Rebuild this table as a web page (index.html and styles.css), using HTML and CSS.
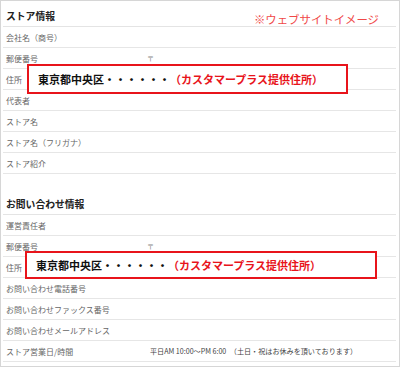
FILE: index.html
```html
<!DOCTYPE html>
<html lang="ja">

<head>
  <meta charset="UTF-8" />
  <meta name="viewport" content="width=device-width, initial-scale=1.0" />
  <title>ストア情報</title>
  <link rel="stylesheet" href="styles.css">
</head>

<body>
  <div class="sheet">
    <!-- Caption over the top right corner -->
    <p class="note">※ウェブサイトイメージ</p>

    <section class="group">
      <h2 class="group-title">ストア情報</h2>
      <div class="row"><span class="label">会社名（商号）</span><span class="value"></span></div>
      <div class="row"><span class="label">郵便番号</span><span class="value postal">〒</span></div>
      <div class="row">
        <span class="label">住所</span><span class="value"></span>
        <div class="callout callout-store">
          <span class="addr">東京都中央区・・・・・・</span><span class="addr-note">（カスタマープラス提供住所）</span>
        </div>
      </div>
      <div class="row"><span class="label">代表者</span><span class="value"></span></div>
      <div class="row"><span class="label">ストア名</span><span class="value"></span></div>
      <div class="row"><span class="label">ストア名（フリガナ）</span><span class="value"></span></div>
      <div class="row"><span class="label">ストア紹介</span><span class="value"></span></div>
    </section>

    <section class="group group-contact">
      <h2 class="group-title">お問い合わせ情報</h2>
      <div class="row"><span class="label">運営責任者</span><span class="value"></span></div>
      <div class="row"><span class="label">郵便番号</span><span class="value postal">〒</span></div>
      <div class="row">
        <span class="label">住所</span><span class="value"></span>
        <div class="callout callout-contact">
          <span class="addr">東京都中央区・・・・・・</span><span class="addr-note">（カスタマープラス提供住所）</span>
        </div>
      </div>
      <div class="row"><span class="label">お問い合わせ電話番号</span><span class="value"></span></div>
      <div class="row"><span class="label">お問い合わせファックス番号</span><span class="value"></span></div>
      <div class="row"><span class="label">お問い合わせメールアドレス</span><span class="value"></span></div>
      <div class="row"><span class="label">ストア営業日/時間</span><span class="value hours">平日AM 10:00～PM 6:00　（土日・祝はお休みを頂いております）</span></div>
    </section>
  </div>
</body>

</html>
```

FILE: styles.css
```css
* {
  box-sizing: border-box;
}

body {
  margin: 0;
  background: #fff;
  font-family: "Noto Sans CJK JP", "Noto Sans", sans-serif;
}

/* Outer frame of the form */
.sheet {
  position: relative;
  width: 400px;
  height: 367px;
  border: 1px solid #d6d6d6;
  padding: 0 3px 4px 2px;
  overflow: hidden;
}

.note {
  position: absolute;
  top: 12px;
  right: 17px;
  margin: 0;
  padding: 0 3px;
  background: #fff;
  font-size: 11.4px;
  line-height: 13px;
  color: #f04848;
}

.group-contact {
  margin-top: 15px;
}

.group-title {
  display: flex;
  align-items: center;
  height: 26px;
  margin: 0;
  padding: 5px 0 0 3px;
  border-bottom: 1px solid #e4e4e4;
  font-size: 9.8px;
  font-weight: bold;
  color: #222;
}

/* One line of the form: label column + value column */
.row {
  position: relative;
  display: grid;
  grid-template-columns: 144px 1fr;
  align-items: center;
  height: 21px;
  padding-left: 3px;
  border-bottom: 1px solid #e6e6e6;
  font-size: 8px;
  color: #666;
}

.value {
  color: #555;
}

.postal {
  font-size: 7px;
  color: #888;
  margin-left: -3px;
}

.hours {
  font-size: 7.1px;
  color: #444;
  white-space: nowrap;
}

/* Highlighted address box laid over the address row */
.callout {
  position: absolute;
  display: flex;
  align-items: center;
  padding-left: 9px;
  border: 2px solid #e8141b;
  background: #fff;
  font-size: 11px;
  font-weight: bold;
  white-space: nowrap;
}

.callout-store {
  top: -5px;
  left: 24px;
  width: 321px;
  height: 30px;
}

.callout-contact {
  top: -6px;
  left: 22px;
  width: 352px;
  height: 28px;
}

.addr {
  color: #111;
}

.addr-note {
  color: #e8141b;
}
```
